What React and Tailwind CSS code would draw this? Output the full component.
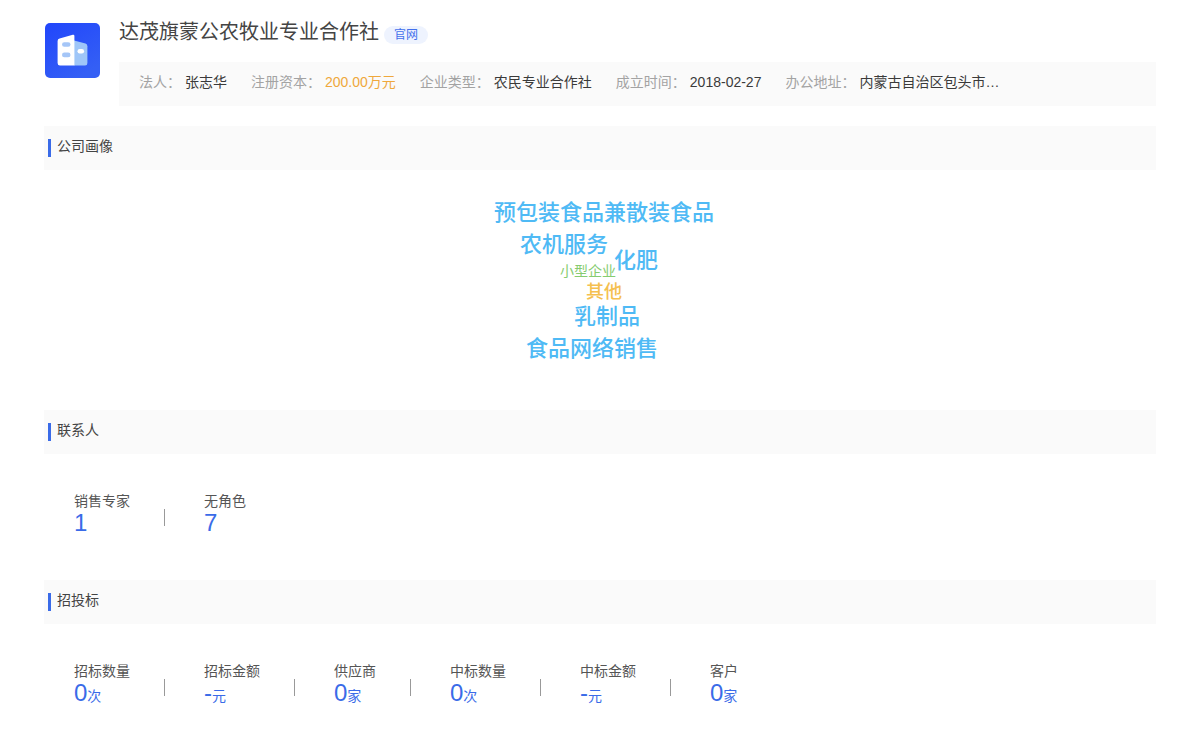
import React from "react";

const facts = [
  { label: "法人：", value: "张志华" },
  { label: "注册资本：", value: "200.00万元", highlight: true },
  { label: "企业类型：", value: "农民专业合作社" },
  { label: "成立时间：", value: "2018-02-27" },
  { label: "办公地址：", value: "内蒙古自治区包头市…" },
];

const contacts = [
  { label: "销售专家", value: "1" },
  { label: "无角色", value: "7" },
];

const bids = [
  { label: "招标数量", value: "0", unit: "次" },
  { label: "招标金额", value: "-", unit: "元" },
  { label: "供应商", value: "0", unit: "家" },
  { label: "中标数量", value: "0", unit: "次" },
  { label: "中标金额", value: "-", unit: "元" },
  { label: "客户", value: "0", unit: "家" },
];

const words = [
  { text: "预包装食品兼散装食品", style: "left-[-106px] top-[27px] text-[22px] font-medium text-[#4fbaf5]" },
  { text: "农机服务", style: "left-[-80px] top-[59px] text-[22px] font-medium text-[#4fbaf5]" },
  { text: "化肥", style: "left-[14px] top-[75px] text-[22px] font-medium text-[#4fbaf5]" },
  { text: "小型企业", style: "left-[-40px] top-[85px] text-[14px] text-[#86cc70]" },
  { text: "其他", style: "left-[-14px] top-[106px] text-[18px] font-medium text-[#f5c04f]" },
  { text: "乳制品", style: "left-[-26px] top-[131px] text-[22px] font-medium text-[#4fbaf5]" },
  { text: "食品网络销售", style: "left-[-74px] top-[163px] text-[22px] font-medium text-[#4fbaf5]" },
];

function CompanyLogo() {
  return (
    <svg className="size-14 shrink-0" viewBox="0 0 56 56" aria-hidden="true">
      <defs>
        <linearGradient id="logo-bg" x1="0" y1="0" x2="0.6" y2="1">
          <stop offset="0" stopColor="#2146fb" />
          <stop offset="1" stopColor="#345ff5" />
        </linearGradient>
      </defs>
      <rect x="1" y="1" width="55" height="55" rx="5" fill="url(#logo-bg)" />
      <path d="M30 18.5 41.5 21.6Q43.4 22.2 43.4 24.2V41Q43.4 43.5 41 43.5H30Z" fill="#9fc6f8" />
      <path d="M15.6 16.6 28.8 12.8Q30.4 12.4 30.4 14V43.5H16Q13.6 43.5 13.6 41V19Q13.6 17.1 15.6 16.6Z" fill="#fff" />
      <rect x="18" y="20.2" width="8.5" height="4.6" rx="2.3" fill="#a5c6f7" />
      <rect x="18" y="30.6" width="8.5" height="4.6" rx="2.3" fill="#a5c6f7" />
      <rect x="33.5" y="27" width="6.6" height="4.4" rx="2.2" fill="#fff" />
    </svg>
  );
}

function Section({ title, children }) {
  return (
    <section>
      <div className="flex h-11 items-center bg-[#fafafa] pl-1">
        <span className="h-[18px] w-[3px] bg-[#3a6be8]" />
        <h2 className="pb-1 pl-1.5 text-sm leading-5 text-[#444]">{title}</h2>
      </div>
      {children}
    </section>
  );
}

function Stats({ items }) {
  return (
    <dl className="flex flex-wrap pt-9 pb-10 pl-[30px]">
      {items.map((item, i) => (
        <div key={item.label} className="flex items-center">
          {i > 0 && <span className="mt-1 mr-[39px] ml-[34px] h-[17px] w-px bg-[#999]" />}
          <div className="flex h-[50px] flex-col">
            <dt className="text-sm leading-[22px] text-[#555]">{item.label}</dt>
            <dd className="text-2xl leading-[22px] text-[#3a6be8]">
              {item.value}
              {item.unit && <span className="text-sm leading-[22px]">{item.unit}</span>}
            </dd>
          </div>
        </div>
      ))}
    </dl>
  );
}

export default function App() {
  return (
    <main className="min-h-screen bg-white px-11 pt-[22px] font-['Liberation_Sans','Noto_Sans_CJK_SC',sans-serif]">
      <header className="flex gap-[19px] pb-5">
        <CompanyLogo />
        <div className="min-w-0 flex-1">
          <div className="flex h-10 items-start gap-[5px]">
            <h1 className="text-xl leading-5 text-[#444]">达茂旗蒙公农牧业专业合作社</h1>
            <a href="#website" className="mt-1 rounded-full bg-[#eef3fe] px-2.5 text-xs leading-[18px] text-[#4370ec]">
              官网
            </a>
          </div>
          <dl className="flex min-h-11 flex-wrap items-center gap-x-6 bg-[#fafafa] px-5 pb-1 text-sm leading-5">
            {facts.map((fact) => (
              <div key={fact.label} className="flex gap-1">
                <dt className="text-[#a3a3a3]">{fact.label}</dt>
                <dd className={fact.highlight ? "text-[#efa83c]" : "text-[#3a3a3a]"}>{fact.value}</dd>
              </div>
            ))}
          </dl>
        </div>
      </header>

      <Section title="公司画像">
        <div className="flex h-60 justify-center">
          <ul className="relative w-0">
            {words.map((word) => (
              <li key={word.text} className={`absolute leading-8 whitespace-nowrap ${word.style}`}>
                {word.text}
              </li>
            ))}
          </ul>
        </div>
      </Section>

      <Section title="联系人">
        <Stats items={contacts} />
      </Section>

      <Section title="招投标">
        <Stats items={bids} />
      </Section>
    </main>
  );
}
